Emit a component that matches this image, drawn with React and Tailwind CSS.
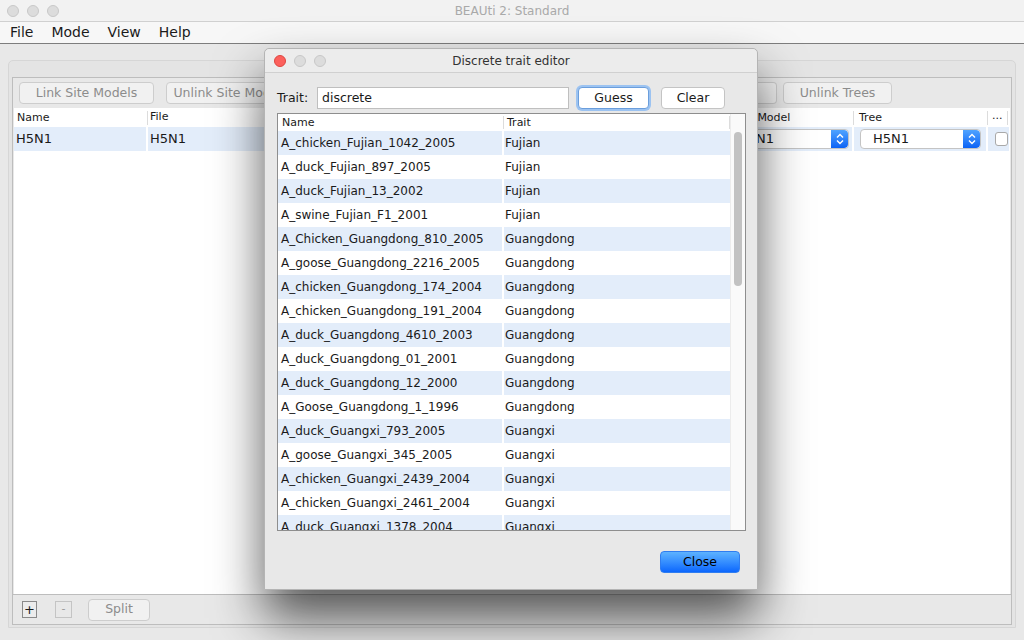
import React from 'react';

const rows = [
  ['A_chicken_Fujian_1042_2005', 'Fujian'],
  ['A_duck_Fujian_897_2005', 'Fujian'],
  ['A_duck_Fujian_13_2002', 'Fujian'],
  ['A_swine_Fujian_F1_2001', 'Fujian'],
  ['A_Chicken_Guangdong_810_2005', 'Guangdong'],
  ['A_goose_Guangdong_2216_2005', 'Guangdong'],
  ['A_chicken_Guangdong_174_2004', 'Guangdong'],
  ['A_chicken_Guangdong_191_2004', 'Guangdong'],
  ['A_duck_Guangdong_4610_2003', 'Guangdong'],
  ['A_duck_Guangdong_01_2001', 'Guangdong'],
  ['A_duck_Guangdong_12_2000', 'Guangdong'],
  ['A_Goose_Guangdong_1_1996', 'Guangdong'],
  ['A_duck_Guangxi_793_2005', 'Guangxi'],
  ['A_goose_Guangxi_345_2005', 'Guangxi'],
  ['A_chicken_Guangxi_2439_2004', 'Guangxi'],
  ['A_chicken_Guangxi_2461_2004', 'Guangxi'],
  ['A_duck_Guangxi_1378_2004', 'Guangxi'],
];

function Lights({ active }) {
  return (
    <div className="flex items-center gap-2">
      <span className={`w-3 h-3 rounded-full border ${active ? 'bg-[#fc605c] border-[#de4640]' : 'bg-[#dcdcdc] border-[#c8c8c8]'}`} />
      <span className="w-3 h-3 rounded-full border bg-[#dcdcdc] border-[#c8c8c8]" />
      <span className="w-3 h-3 rounded-full border bg-[#dcdcdc] border-[#c8c8c8]" />
    </div>
  );
}

function Arrows() {
  return (
    <span className="w-[17px] h-full rounded-r-[4px] bg-gradient-to-b from-[#4fa3ff] to-[#0b62f5] flex items-center justify-center">
      <svg width="8" height="12" viewBox="0 0 8 12" fill="none" stroke="white" strokeWidth="1.4">
        <path d="M1 4.5 L4 1.5 L7 4.5" />
        <path d="M1 7.5 L4 10.5 L7 7.5" />
      </svg>
    </span>
  );
}

function GrayButton({ children, className }) {
  return (
    <div className={`h-[22px] rounded-[4px] border border-[#cdcdcd] bg-[#f1f1f1] text-[#8c8c8c] text-[12.5px] flex items-center justify-center ${className}`}>
      {children}
    </div>
  );
}

export default function App() {
  return (
    <div className="relative w-[1024px] h-[640px] overflow-hidden bg-[#e8e8e8] text-[#1a1a1a] font-['DejaVu_Sans',sans-serif]">
      {/* title bar */}
      <div className="h-[22px] bg-[#f2f2f2] border-b border-[#d0d0d0] flex items-center px-[7px] relative">
        <Lights />
        <div className="absolute inset-0 flex items-center justify-center text-[12px] text-[#a9a9a9]">BEAUti 2: Standard</div>
      </div>
      {/* menu bar */}
      <div className="h-[22px] bg-[#f7f7f7] border-b border-[#7d7d7d] flex items-center text-[14px] pl-[10px] gap-[18px]">
        <span>File</span>
        <span>Mode</span>
        <span>View</span>
        <span>Help</span>
      </div>

      {/* main panel */}
      <div className="pt-[16px] px-[8px]">
        <div className="h-[568px] w-[1008px] rounded-t-[5px] border border-[#d6d6d6] bg-[#e4e4e4] pt-[16px] px-[3px] pb-[2px]">
          <div className="h-full border border-[#bdbdbd] bg-[#e8e8e8] flex flex-col">
            <div className="h-[30px] flex items-center pl-[6px] gap-[12px] shrink-0">
              <GrayButton className="w-[135px]">Link Site Models</GrayButton>
              <GrayButton className="w-[130px]">Unlink Site Models</GrayButton>
              <div className="flex-1" />
              <GrayButton className="w-[62px] rounded-l-none border-l-0 -mr-[6px]"></GrayButton>
              <GrayButton className="w-[109px] mr-[119px]">Unlink Trees</GrayButton>
            </div>
            <div className="flex-1 bg-white mx-px">
              <div className="h-[19px] flex text-[11px] items-center">
                <div className="w-[134px] pl-[3px] border-r border-[#dcdcdc] h-[14px] leading-[14px]">Name</div>
                <div className="w-[573px] pl-[2px]">File</div>
                <div className="w-[133px] pl-[3px] border-r border-[#dcdcdc] h-[14px] leading-[14px]">Clock Model</div>
                <div className="w-[134px] pl-[5px] border-r border-[#dcdcdc] h-[14px] leading-[14px]">Tree</div>
                <div className="w-[20px] pl-[4px] h-[14px] leading-[10px] border-r border-[#dcdcdc]">...</div>
              </div>
              <div className="h-[24px] flex items-center bg-[#e3edfa] text-[13px] w-[995px]">
                <div className="w-[134px] pl-[2px] border-r-2 border-white h-full flex items-center">H5N1</div>
                <div className="w-[573px] pl-[2px] h-full flex items-center">H5N1</div>
                <div className="w-[133px] h-full flex items-center py-[2px] pl-[4px] pr-[3px] border-r-2 border-white">
                  <div className="h-[20px] flex-1 rounded-[4px] bg-white border border-[#c4c4c4] flex items-center justify-between pl-[12px] overflow-hidden">
                    <span>H5N1</span>
                    <Arrows />
                  </div>
                </div>
                <div className="w-[134px] h-full flex items-center py-[2px] pl-[6px] pr-[5px] border-r-2 border-white">
                  <div className="h-[20px] flex-1 rounded-[4px] bg-white border border-[#c4c4c4] flex items-center justify-between pl-[12px] overflow-hidden">
                    <span>H5N1</span>
                    <Arrows />
                  </div>
                </div>
                <div className="w-[20px] h-full flex items-center pl-[7px]">
                  <div className="w-[14px] h-[14px] rounded-[3px] bg-white border border-[#a9a9a9]" />
                </div>
              </div>
            </div>
            <div className="h-[30px] border-t border-[#bdbdbd] flex items-center pl-[9px] shrink-0">
              <div className="w-[15px] h-[17px] border border-[#8a8a8a] bg-[#ececec] flex items-center justify-center text-[13px]">+</div>
              <div className="w-[17px] h-[17px] border border-[#c4c4c4] ml-[18px] flex items-center justify-center text-[11px] text-[#999]">-</div>
              <GrayButton className="w-[62px] ml-[16px] h-[20px]">Split</GrayButton>
            </div>
          </div>
        </div>
      </div>

      {/* dialog window */}
      <div className="absolute left-[264px] top-[48px] w-[494px] h-[542px] bg-[#e8e8e8] rounded-t-[5px] border border-[#b4b4b4] shadow-[0_28px_50px_rgba(0,0,0,0.65)] flex flex-col">
        <div className="h-[24px] border-b border-[#d0d0d0] bg-[#ececec] rounded-t-[5px] flex items-center pl-[9px] relative shrink-0">
          <Lights active />
          <div className="absolute inset-0 flex items-center justify-center text-[12px] text-[#333]">Discrete trait editor</div>
        </div>
        <div className="px-[12px] pt-[14px] flex flex-col flex-1">
          <div className="flex items-center h-[22px]">
            <span className="text-[12.5px] w-[40px]">Trait:</span>
            <div className="w-[252px] h-[22px] bg-white border border-[#bfbfbf] flex items-center pl-[4px] text-[12.5px]">discrete</div>
            <div className="ml-[9px] w-[71px] h-[22px] rounded-[4px] bg-white border border-[#6b9edc] shadow-[0_0_0_2px_#9cc3f1] flex items-center justify-center text-[12.5px]">Guess</div>
            <div className="ml-[12px] w-[64px] h-[22px] rounded-[4px] bg-white border border-[#c4c4c4] flex items-center justify-center text-[12.5px]">Clear</div>
          </div>
          <div className="mt-[4px] w-[469px] h-[418px] border border-[#8e8e8e] bg-white flex overflow-hidden">
            <div className="w-[452px] flex flex-col">
              <div className="h-[17px] flex text-[11px] items-center shrink-0">
                <div className="w-[226px] pl-[4px] border-r border-[#dcdcdc] h-[13px] leading-[13px]">Name</div>
                <div className="w-[226px] pl-[3px] border-r border-[#dcdcdc] h-[13px] leading-[13px]">Trait</div>
              </div>
              {rows.map(([name, trait], i) => (
                <div key={name} className={`h-[24px] flex items-center text-[12px] shrink-0 ${i % 2 === 0 ? 'bg-[#e3edfa]' : 'bg-white'}`}>
                  <div className="w-[226px] pl-[3px] h-full flex items-center border-r-2 border-white">{name}</div>
                  <div className="w-[224px] pl-[1px] h-full flex items-center">{trait}</div>
                </div>
              ))}
            </div>
            <div className="w-[16px] border-l border-[#ececec] bg-[#fafafa] pt-[18px] flex justify-center">
              <div className="w-[8px] h-[154px] rounded-full bg-[#c2c2c2]" />
            </div>
          </div>
          <div className="flex justify-end mt-[20px] pr-[5px]">
            <div className="w-[80px] h-[22px] rounded-[4px] bg-gradient-to-b from-[#5db2ff] to-[#0b66fd] border border-[#2f7df0] flex items-center justify-center text-[12.5px] text-black">Close</div>
          </div>
        </div>
      </div>
    </div>
  );
}
